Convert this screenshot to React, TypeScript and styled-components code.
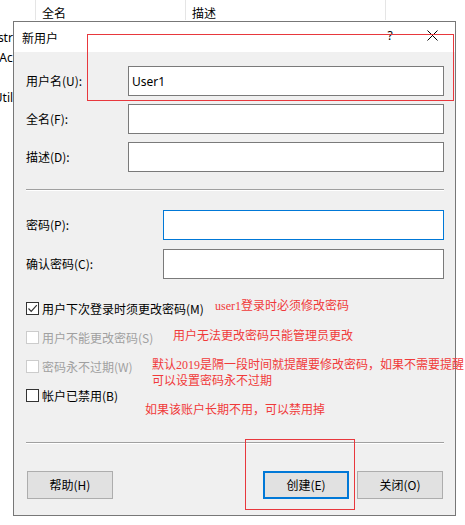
import React from "react";
import styled, { createGlobalStyle, css } from "styled-components";

const GlobalStyle = createGlobalStyle`
  html, body { margin: 0; padding: 0; background: #fff; }
  body {
    font-family: "Noto Sans CJK SC", "Noto Sans", sans-serif;
    font-size: 12px;
    color: #000;
  }
  * { box-sizing: border-box; }
`;

const Screen = styled.div`
  position: relative;
  width: 465px;
  height: 525px;
  overflow: hidden;
  background: #fff;
`;

/* ---------- background list view ---------- */
const ListView = styled.div`
  margin-left: -48px;
  display: flex;
  flex-direction: column;
`;

const ListHeader = styled.div`
  display: flex;
  height: 22px;
`;

const HeaderCell = styled.div<{ $w: number }>`
  width: ${(p) => p.$w}px;
  flex: none;
  height: 20px;
  border-right: 1px solid #e5e5e5;
  padding: 4px 0 0 ${(p) => (p.$w > 100 ? 6 : 10)}px;
  line-height: 18px;
  font-size: 12px;
  white-space: nowrap;
`;

const ListRows = styled.div`
  display: flex;
  flex-direction: column;
  padding-top: 5px;
`;

const ListRow = styled.div`
  height: 20px;
  line-height: 21px;
  padding-left: 6px;
  font-family: "Noto Sans", sans-serif;
  font-size: 12px;
  white-space: nowrap;
`;

/* ---------- dialog ---------- */
const Dialog = styled.div`
  position: absolute;
  left: 13px;
  top: 21px;
  width: 443px;
  height: 495px;
  border: 1px solid #777;
  background: #f0f0f0;
  display: flex;
  flex-direction: column;
`;

const TitleBar = styled.div`
  height: 30px;
  flex: none;
  background: #fff;
  display: flex;
  align-items: center;
  padding-left: 8px;
`;

const Title = styled.div`
  flex: 1;
  font-size: 12px;
  line-height: 16px;
  padding-top: 1px;
`;

const CaptionButton = styled.div<{ $w: number }>`
  width: ${(p) => p.$w}px;
  height: 30px;
  display: flex;
  align-items: center;
  justify-content: center;
  font-family: "Noto Sans", sans-serif;
  font-size: 12px;
  padding-bottom: 3px;
`;

const Body = styled.div`
  flex: 1;
  display: flex;
  flex-direction: column;
  padding: 14px 11px 0 12px;
`;

const FieldGroup = styled.div<{ $gap: number }>`
  display: flex;
  flex-direction: column;
  gap: ${(p) => p.$gap}px;
`;

const FieldRow = styled.div`
  display: flex;
  align-items: center;
  height: 30px;
`;

const Label = styled.div<{ $w: number }>`
  width: ${(p) => p.$w}px;
  flex: none;
  font-size: 12px;
  line-height: 16px;
`;

const TextBox = styled.div<{ $focused?: boolean }>`
  flex: 1;
  height: 30px;
  background: #fff;
  border: 1px solid ${(p) => (p.$focused ? "#0078d7" : "#7a7a7a")};
  padding-left: 3px;
  display: flex;
  align-items: center;
  font-family: "Noto Sans", sans-serif;
  font-size: 12px;
`;

const Separator = styled.div<{ $top: number; $bottom: number }>`
  height: 2px;
  border-top: 1px solid #a0a0a0;
  border-bottom: 1px solid #fff;
  margin: ${(p) => p.$top}px 0 ${(p) => p.$bottom}px;
`;

const CheckList = styled.div`
  display: flex;
  flex-direction: column;
  gap: 16px;
  margin-top: 23px;
`;

const CheckRow = styled.div<{ $disabled?: boolean }>`
  display: flex;
  align-items: center;
  gap: 3px;
  height: 13px;
  color: ${(p) => (p.$disabled ? "#a0a0a0" : "#000")};
  font-size: 12px;
  line-height: 16px;
  white-space: nowrap;
`;

const Box = styled.div<{ $disabled?: boolean }>`
  width: 13px;
  height: 13px;
  flex: none;
  background: #fff;
  border: 1px solid ${(p) => (p.$disabled ? "#cccccc" : "#333")};
  display: flex;
  align-items: center;
  justify-content: center;
`;

const ButtonRow = styled.div`
  display: flex;
  justify-content: space-between;
  padding: 0 1px 0 1px;
`;

const ButtonGroup = styled.div`
  display: flex;
  gap: 8px;
`;

const Button = styled.div<{ $default?: boolean }>`
  width: 86px;
  height: 28px;
  background: #e1e1e1;
  border: 1px solid #adadad;
  display: flex;
  align-items: center;
  justify-content: center;
  font-size: 12px;
  line-height: 16px;
  ${(p) =>
    p.$default &&
    css`
      border: 2px solid #0078d7;
    `}
`;

/* ---------- annotations ---------- */
const Highlight = styled.div<{ $x: number; $y: number; $w: number; $h: number }>`
  position: absolute;
  left: ${(p) => p.$x}px;
  top: ${(p) => p.$y}px;
  width: ${(p) => p.$w}px;
  height: ${(p) => p.$h}px;
  border: 1px solid #e8383d;
  pointer-events: none;
`;

const Note = styled.div<{ $x: number; $y: number }>`
  position: absolute;
  left: ${(p) => p.$x}px;
  top: ${(p) => p.$y}px;
  color: #f03a3a;
  font-family: "Liberation Serif", "Noto Sans CJK SC", serif;
  font-size: 12px;
  line-height: 16px;
  white-space: pre;
`;

const CheckMark = () => (
  <svg width="11" height="11" viewBox="0 0 11 11">
    <path d="M1.5 5.5 L4.2 8.3 L9.8 2.2" fill="none" stroke="#333" strokeWidth="1.2" />
  </svg>
);

const CloseIcon = () => (
  <svg width="11" height="11" viewBox="0 0 11 11">
    <path d="M0.5 0.5 L10.5 10.5 M10.5 0.5 L0.5 10.5" stroke="#000" strokeWidth="1" />
  </svg>
);

export default function App() {
  return (
    <>
      <GlobalStyle />
      <Screen>
        <ListView>
          <ListHeader>
            <HeaderCell $w={84}>名称</HeaderCell>
            <HeaderCell $w={150}>全名</HeaderCell>
            <HeaderCell $w={200}>描述</HeaderCell>
          </ListHeader>
          <ListRows>
            <ListRow>Administrator</ListRow>
            <ListRow>DefaultAccount</ListRow>
            <ListRow>Guest</ListRow>
            <ListRow>WDAGUtilityAccount</ListRow>
          </ListRows>
        </ListView>

        <Dialog>
          <TitleBar>
            <Title>新用户</Title>
            <CaptionButton $w={38}>?</CaptionButton>
            <CaptionButton $w={46}>
              <CloseIcon />
            </CaptionButton>
          </TitleBar>
          <Body>
            <FieldGroup $gap={8}>
              <FieldRow>
                <Label $w={102}>用户名(U):</Label>
                <TextBox>User1</TextBox>
              </FieldRow>
              <FieldRow>
                <Label $w={102}>全名(F):</Label>
                <TextBox />
              </FieldRow>
              <FieldRow>
                <Label $w={102}>描述(D):</Label>
                <TextBox />
              </FieldRow>
            </FieldGroup>
            <Separator $top={17} $bottom={19} />
            <FieldGroup $gap={9}>
              <FieldRow>
                <Label $w={137}>密码(P):</Label>
                <TextBox $focused />
              </FieldRow>
              <FieldRow>
                <Label $w={137}>确认密码(C):</Label>
                <TextBox />
              </FieldRow>
            </FieldGroup>
            <CheckList>
              <CheckRow>
                <Box>
                  <CheckMark />
                </Box>
                用户下次登录时须更改密码(M)
              </CheckRow>
              <CheckRow $disabled>
                <Box $disabled />
                用户不能更改密码(S)
              </CheckRow>
              <CheckRow $disabled>
                <Box $disabled />
                密码永不过期(W)
              </CheckRow>
              <CheckRow>
                <Box />
                帐户已禁用(B)
              </CheckRow>
            </CheckList>
            <Separator $top={40} $bottom={27} />
            <ButtonRow>
              <Button>帮助(H)</Button>
              <ButtonGroup>
                <Button $default>创建(E)</Button>
                <Button>关闭(O)</Button>
              </ButtonGroup>
            </ButtonRow>
          </Body>
        </Dialog>

        <Highlight $x={87} $y={34} $w={367} $h={67} />
        <Highlight $x={245} $y={439} $w={110} $h={71} />

        <Note $x={215} $y={298}>user1登录时必须修改密码</Note>
        <Note $x={173} $y={328}>用户无法更改密码只能管理员更改</Note>
        <Note $x={152} $y={357}>{"默认2019是隔一段时间就提醒要修改密码，如果不需要提醒\n可以设置密码永不过期"}</Note>
        <Note $x={145} $y={402}>如果该账户长期不用，可以禁用掉</Note>
      </Screen>
    </>
  );
}
